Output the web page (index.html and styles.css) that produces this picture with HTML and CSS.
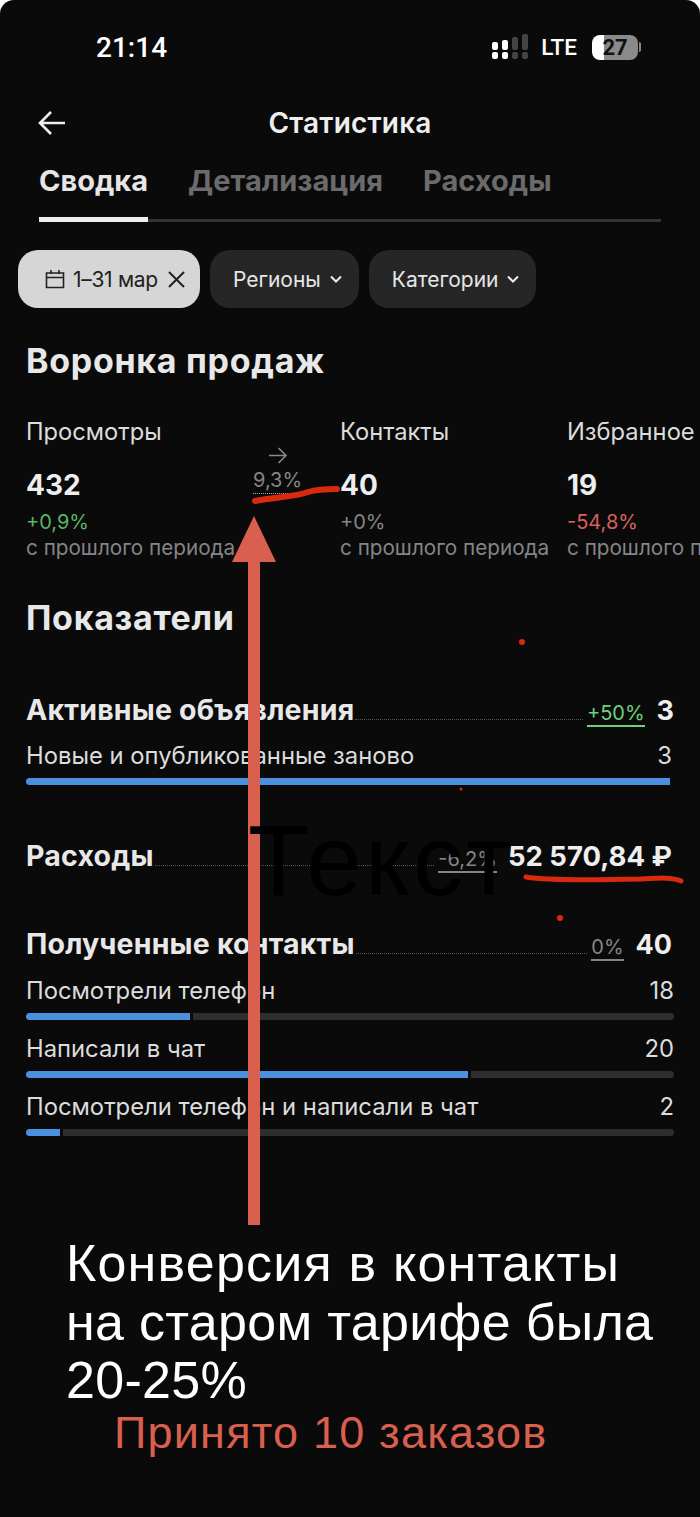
FILE: index.html
```html
<!DOCTYPE html>
<html lang="ru">
<head>
    <meta charset="UTF-8">
    <meta name="viewport" content="width=device-width, initial-scale=1.0">
    <title>Статистика</title>
    <link rel="stylesheet" href="styles.css">
</head>
<body>
    <div class="screen">
        <div class="status">
            <span class="time">21:14</span>
            <div class="status-right">
                <svg class="signal" width="36" height="26" viewBox="0 0 36 26">
                    <g fill="#fff">
                        <rect x="0" y="8" width="6" height="8" rx="2"/>
                        <rect x="10" y="6" width="6" height="10" rx="2"/>
                        <rect x="0" y="18" width="6" height="7" rx="2"/>
                        <rect x="10" y="18" width="6" height="7" rx="2"/>
                    </g>
                    <g fill="#444">
                        <rect x="20" y="3" width="6" height="13" rx="2"/>
                        <rect x="30" y="0" width="6" height="16" rx="2"/>
                        <rect x="20" y="18" width="6" height="7" rx="2"/>
                        <rect x="30" y="18" width="6" height="7" rx="2"/>
                    </g>
                </svg>
                <span class="lte">LTE</span>
                <div class="battery"><span class="battery-num">27</span></div>
                <span class="battery-tip"></span>
            </div>
        </div>

        <div class="nav">
            <svg class="back" width="28" height="26" viewBox="0 0 28 26">
                <path d="M13 2 L2 13 L13 24 M2 13 H27" fill="none" stroke="#eee" stroke-width="2.6"/>
            </svg>
            <span class="nav-title">Статистика</span>
        </div>

        <div class="tabs">
            <span class="tab active">Сводка</span>
            <span class="tab">Детализация</span>
            <span class="tab">Расходы</span>
        </div>
        <div class="tab-line"><div class="tab-line-on"></div></div>

        <div class="chips">
            <div class="chip chip-on">
                <svg width="20" height="20" viewBox="0 0 20 20">
                    <path d="M1.5 4 H18.5 V18.5 H1.5 Z M1.5 8.5 H18.5 M6 1 V5 M14 1 V5" fill="none" stroke="#222" stroke-width="1.6"/>
                </svg>
                <span class="chip-date">1–31 мар</span>
                <svg class="chip-x" width="17" height="17" viewBox="0 0 17 17">
                    <path d="M1 1 L16 16 M16 1 L1 16" stroke="#222" stroke-width="2"/>
                </svg>
            </div>
            <div class="chip">
                <span>Регионы</span>
                <svg width="12" height="8" viewBox="0 0 12 8"><path d="M1 1.5 L6 6.5 L11 1.5" fill="none" stroke="#eee" stroke-width="2"/></svg>
            </div>
            <div class="chip">
                <span>Категории</span>
                <svg width="12" height="8" viewBox="0 0 12 8"><path d="M1 1.5 L6 6.5 L11 1.5" fill="none" stroke="#eee" stroke-width="2"/></svg>
            </div>
        </div>

        <h2 class="title title-funnel">Воронка продаж</h2>

        <div class="funnel">
            <div class="step step-1">
                <div class="step-name">Просмотры</div>
                <div class="step-num">432</div>
                <div class="step-delta green">+0,9%</div>
                <div class="step-note">с прошлого периода</div>
            </div>
            <div class="conv">
                <svg width="20" height="17" viewBox="0 0 20 17"><path d="M10.5 1 L18 8.5 L10.5 16 M18 8.5 H1" fill="none" stroke="#8a8a8a" stroke-width="1.6"/></svg>
                <span class="conv-val">9,3%</span>
            </div>
            <div class="step step-2">
                <div class="step-name">Контакты</div>
                <div class="step-num">40</div>
                <div class="step-delta gray">+0%</div>
                <div class="step-note">с прошлого периода</div>
            </div>
            <div class="step">
                <div class="step-name">Избранное</div>
                <div class="step-num">19</div>
                <div class="step-delta red">-54,8%</div>
                <div class="step-note">с прошлого периода</div>
            </div>
        </div>

        <h2 class="title title-stats">Показатели</h2>

        <div class="metric metric-ads">
            <div class="metric-head">
                <span class="metric-name">Активные объявления</span>
                <span class="dots"></span>
                <span class="metric-delta green-line">+50%</span>
                <span class="metric-num">3</span>
            </div>
            <div class="sub-row"><span>Новые и опубликованные заново</span><span>3</span></div>
            <div class="bar bar-single"><div class="bar-fill bar-full"></div></div>
        </div>

        <div class="metric metric-cost">
            <div class="metric-head">
                <span class="metric-name">Расходы</span>
                <span class="dots"></span>
                <span class="metric-delta">-6,2%</span>
                <span class="metric-num">52 570,84 ₽</span>
            </div>
        </div>

        <div class="metric metric-contacts">
            <div class="metric-head">
                <span class="metric-name">Полученные контакты</span>
                <span class="dots"></span>
                <span class="metric-delta">0%</span>
                <span class="metric-num">40</span>
            </div>
            <div class="sub-row sub-tight"><span>Посмотрели телефон</span><span>18</span></div>
            <div class="bar"><div class="bar-fill" style="width: 25.3%"></div><div class="bar-rest"></div></div>
            <div class="sub-row"><span>Написали в чат</span><span>20</span></div>
            <div class="bar"><div class="bar-fill" style="width: 68.2%"></div><div class="bar-rest"></div></div>
            <div class="sub-row"><span>Посмотрели телефон и написали в чат</span><span>2</span></div>
            <div class="bar"><div class="bar-fill" style="width: 5.2%"></div><div class="bar-rest"></div></div>
        </div>

        <!-- пометки поверх скриншота -->
        <svg class="marks" width="700" height="1517" viewBox="0 0 700 1517">
            <path d="M248 555 H260 V1225 H248 Z" fill="#d95f4e"/>
            <path d="M254 516 L276 562 H232 Z" fill="#d95f4e"/>
            <path d="M255 501 C275 497 295 497 308 492 C318 489 328 489 337 489" fill="none" stroke="#d92a0e" stroke-width="6" stroke-linecap="round"/>
            <path d="M526 877 C550 881 600 880 640 879 C660 878 672 877 681 881" fill="none" stroke="#d92a0e" stroke-width="5" stroke-linecap="round"/>
            <circle cx="522" cy="642" r="3" fill="#d92a0e"/>
            <circle cx="560" cy="918" r="3" fill="#d92a0e"/>
            <circle cx="461" cy="789" r="1.5" fill="#d92a0e"/>
            <circle cx="440" cy="1258" r="1.5" fill="#d92a0e"/>
        </svg>
        <div class="note-black">Текст</div>
        <div class="note-white"><span class="note-wide">Конверсия в контакты</span><br>на старом тарифе была<br>20-25%</div>
        <div class="note-red">Принято 10 заказов</div>
    </div>
</body>
</html>
```

FILE: styles.css
```css
body {
    margin: 0;
    background: #fff;
    font-family: Inter, Roboto, sans-serif;
    color: #e8e8e8;
}
.screen {
    position: relative;
    width: 700px;
    height: 1517px;
    overflow: hidden;
    background: #0a0a0b;
    border-radius: 14px 14px 0 0;
}

/* status bar */
.status {
    display: flex;
    justify-content: space-between;
    align-items: center;
    height: 96px;
    padding: 0 59px 2px 96px;
    box-sizing: border-box;
}
.time {
    font-family: Roboto, sans-serif;
    font-size: 28px;
    font-weight: 500;
    color: #fff;
}
.status-right {
    display: flex;
    align-items: center;
}
.signal { margin-right: 13px; }
.lte {
    font-family: Roboto, sans-serif;
    font-size: 22.5px;
    font-weight: 500;
    color: #fff;
    margin-right: 15px;
}
.battery {
    width: 46px;
    height: 25px;
    border-radius: 8px;
    background: linear-gradient(90deg, #fff 0, #fff 26%, #8a8a8a 26%);
    color: #111;
    font-family: Roboto, sans-serif;
    font-size: 22px;
    font-weight: 700;
    line-height: 25px;
    text-align: center;
}
.battery-tip {
    width: 2px;
    height: 10px;
    margin-left: 1px;
    border-radius: 0 3px 3px 0;
    background: #8a8a8a;
}

/* nav */
.nav {
    position: relative;
    height: 54px;
    display: flex;
    align-items: center;
    justify-content: center;
}
.back {
    position: absolute;
    left: 38px;
    top: 14px;
}
.nav-title {
    font-size: 28px;
    font-weight: 600;
    letter-spacing: 0.2px;
    color: #eee;
}

/* tabs */
.tabs {
    display: flex;
    gap: 40px;
    padding: 10px 39px 0;
    height: 60px;
    box-sizing: border-box;
}
.tab {
    font-size: 29px;
    font-weight: 700;
    line-height: 42px;
    color: #6b6b6b;
}
.tab.active { color: #e6e6e6; }
.tab-line {
    height: 3px;
    margin: 9px 39px 0;
    background: #333;
    position: relative;
}
.tab-line-on {
    width: 109px;
    height: 5px;
    background: #eee;
    position: relative;
    top: -2px;
}

/* filter chips */
.chips {
    display: flex;
    gap: 10px;
    padding: 28px 18px 0;
}
.chip {
    display: flex;
    align-items: center;
    gap: 9px;
    height: 58px;
    padding: 0 17px 0 23px;
    border-radius: 20px;
    background: #262626;
    font-size: 21px;
    color: #e6e6e6;
}
.chip-on {
    background: #d6d6d6;
    color: #222;
    gap: 8px;
    padding: 0 15px 0 27px;
}
.chip-date { letter-spacing: -0.3px; }
.chip-x { margin-left: 2px; }

.title {
    margin: 0;
    padding-left: 26px;
    font-size: 34px;
    font-weight: 700;
    letter-spacing: 0.7px;
    line-height: 40px;
    color: #e8e8e8;
}
.title-funnel { margin-top: 33px; }
.title-stats { margin-top: 45px; }

/* funnel */
.funnel {
    display: flex;
    margin-top: 36px;
    padding-left: 26px;
    height: 136px;
    white-space: nowrap;
}
.step { flex: none; }
.step-1 { width: 227px; }
.step-2 { width: 227px; }
.step-name {
    font-size: 23.7px;
    line-height: 30px;
    color: #dcdcdc;
}
.step-num {
    margin-top: 21px;
    font-size: 28px;
    font-weight: 700;
    line-height: 34px;
    color: #eee;
}
.step-delta {
    margin-top: 7px;
    font-size: 20px;
    line-height: 26px;
}
.step-note {
    font-size: 20.7px;
    line-height: 26px;
    color: #858585;
}
.green { color: #58b568; }
.gray { color: #858585; }
.red { color: #d9605c; }
.conv {
    flex: none;
    width: 87px;
    display: flex;
    flex-direction: column;
    align-items: flex-start;
    padding-top: 30px;
    color: #858585;
    font-size: 20px;
}
.conv svg { margin-left: 15px; }
.conv-val {
    margin-top: 4px;
    line-height: 24px;
    padding-bottom: 1px;
    border-bottom: 1px dotted #aaa;
}

/* metrics */
.metric { padding: 0 28px 0 26px; }
.metric-ads { margin-top: 54px; }
.metric-ads .metric-head { margin-right: -2px; }
.metric-cost { margin-top: 53px; }
.metric-contacts { margin-top: 52px; padding-right: 26px; }
.metric-head {
    display: flex;
    align-items: baseline;
    height: 36px;
    line-height: 36px;
}
.metric-name {
    font-size: 28.5px;
    font-weight: 700;
    letter-spacing: 0.2px;
    color: #e8e8e8;
}
.dots {
    flex: 1;
    margin: 0 4px 0 1px;
    border-bottom: 1px dotted #555;
}
.metric-delta {
    font-size: 20px;
    color: #858585;
    border-bottom: 2px solid #858585;
    line-height: 24px;
    margin-right: 12px;
}
.metric-cost .metric-delta { margin-right: 11px; }
.green-line {
    color: #6fd07a;
    border-color: #6fd07a;
}
.metric-num {
    font-size: 27px;
    font-weight: 700;
    color: #eee;
}
.metric-cost .metric-num { font-size: 27.5px; }
.metric-contacts .metric-head { margin-right: 2px; }
.sub-row {
    display: flex;
    justify-content: space-between;
    margin-top: 13px;
    font-size: 23.8px;
    line-height: 30px;
    color: #dcdcdc;
}
.metric-contacts .sub-row { margin-top: 14px; }
.metric-contacts .sub-tight { margin-top: 14px; }
.bar {
    display: flex;
    gap: 3px;
    height: 7px;
    margin-top: 7px;
}
.bar-single { margin-right: 2px; }
.bar-fill {
    flex: none;
    height: 100%;
    background: #4a90df;
    border-radius: 4px 0 0 4px;
}
.bar-full { width: 100%; }
.bar-rest {
    flex: 1;
    background: #2e2e2e;
    border-radius: 0 4px 4px 0;
}

/* overlay annotations */
.marks {
    position: absolute;
    left: 0;
    top: 0;
}
.note-black {
    position: absolute;
    left: 248px;
    top: 807px;
    font-family: "Liberation Sans", sans-serif;
    font-size: 100px;
    letter-spacing: 3px;
    line-height: 106px;
    color: #000;
}
.note-white {
    position: absolute;
    left: 66px;
    top: 1234px;
    font-family: "Liberation Sans", sans-serif;
    font-size: 52px;
    letter-spacing: 0.3px;
    line-height: 58.5px;
    color: #fff;
}
.note-wide { letter-spacing: 1.2px; }
.note-red {
    position: absolute;
    left: 114px;
    top: 1408px;
    font-family: "Liberation Sans", sans-serif;
    font-size: 45px;
    letter-spacing: 1.2px;
    line-height: 50px;
    color: #d95f4e;
}
```
